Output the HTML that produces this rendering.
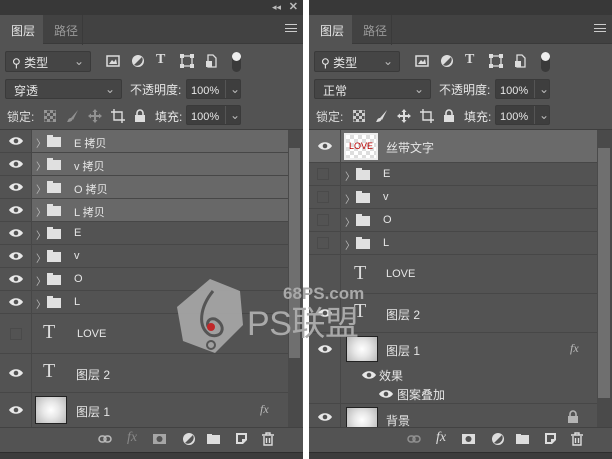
<!DOCTYPE html>
<html><head><meta charset="utf-8"><style>
*{margin:0;padding:0;box-sizing:border-box}
body{width:612px;height:459px;background:#fff;position:relative;overflow:hidden;font-family:"Liberation Sans","Noto Sans CJK SC",sans-serif;color:#e6e6e6;font-size:12px}
.p{position:absolute;top:0;width:303px;height:459px;background:#535353;overflow:hidden}
.a{position:absolute;white-space:nowrap}
.top{left:0;top:0;right:0;height:15px;background:#383838}
.tabs{left:0;top:15px;right:0;height:29px;background:#424242;border-bottom:1px solid #3a3a3a}
.tab{top:15px;height:30px;padding:7px 0 0 11px;font-size:12px}
.box{background:#454545;border:1px solid #3a3a3a;border-radius:2px}
.col{left:31px;top:0;bottom:0;width:1px;background:#474747}
.t{font-size:11px}
.fold{width:14px;height:10px;background:#e0e0e0}
.fold:before{content:"";position:absolute;left:0;top:-2px;width:6px;height:2px;background:#e0e0e0}
.chev{color:#bbb;font-size:10px}
.T{font-family:"Liberation Serif",serif;font-size:20px;color:#ddd}
.thumb{background:radial-gradient(circle,#fff 0%,#e8e8e8 40%,#b8b8b8 100%);border:1px solid #222}
.foot{left:0;right:0;top:427px;height:25px;background:#535353;border-top:1px solid #424242}
.bot{left:0;right:0;top:452px;height:7px;background:#3c3c3c;border-top:1px solid #2e2e2e}
svg.i{position:absolute}
</style></head><body>

<!-- shared icon defs -->
<svg width="0" height="0" style="position:absolute">
<defs>
<g id="eye"><path d="M1,5 C4,0 12,0 15,5 C12,10 4,10 1,5Z" fill="#e8e8e8"/><circle cx="8" cy="5" r="2.3" fill="#535353"/></g>
<g id="fimg"><rect x="1" y="1" width="12" height="10" fill="none" stroke="#ddd" stroke-width="1.5"/><path d="M3,9 L6,5 L8,7 L10,4 L11,9Z" fill="#ddd"/></g>
<g id="fadj"><circle cx="7" cy="7" r="6" fill="#ddd"/><path d="M11,3 A6,6 0 0 1 3,11Z" fill="#535353"/></g>
<g id="fshape"><rect x="2" y="2" width="10" height="10" fill="none" stroke="#ddd" stroke-width="1.3"/><rect x="0" y="0" width="4" height="4" fill="#ddd"/><rect x="10" y="0" width="4" height="4" fill="#ddd"/><rect x="0" y="10" width="4" height="4" fill="#ddd"/><rect x="10" y="10" width="4" height="4" fill="#ddd"/></g>
<g id="fsmart"><path d="M4,1 H9 L12,4 V13 H4Z" fill="none" stroke="#ddd" stroke-width="1.3"/><rect x="2" y="7" width="6" height="6" fill="#ddd"/></g>
<g id="flink"><rect x="1" y="3" width="7" height="6" rx="3" fill="none" stroke="#bbb" stroke-width="1.5"/><rect x="6" y="3" width="7" height="6" rx="3" fill="none" stroke="#bbb" stroke-width="1.5"/></g>
<g id="fmask"><rect x="0" y="1" width="13" height="10" fill="#ddd"/><circle cx="6.5" cy="6" r="3" fill="#535353"/></g>
<g id="ffold"><path d="M0,2 H5 V3 H13 V12 H0Z" fill="#ddd"/></g>
<g id="fnew"><path d="M1,1 H12 V8 L8,12 H1Z M3,3 V10 H7 V7 H10 V3Z" fill="#ddd" fill-rule="evenodd"/></g>
<g id="ftrash"><path d="M1,3 H13 M5,3 V1 H9 V3 M3,4 V13 H11 V4 M5.5,6 V11 M8.5,6 V11" fill="none" stroke="#ddd" stroke-width="1.4"/></g>
<g id="flock"><rect x="1" y="6" width="10" height="7" fill="#ddd"/><path d="M3,6 V4 A3,3 0 0 1 9,4 V6" fill="none" stroke="#ddd" stroke-width="1.6"/></g>
<g id="fchk"><rect x="0" y="0" width="12" height="12" fill="none" stroke="#ccc"/><path d="M0,0h3v3h-3zM6,0h3v3h-3zM3,3h3v3h-3zM9,3h3v3h-3zM0,6h3v3h-3zM6,6h3v3h-3zM3,9h3v3h-3zM9,9h3v3h-3z" fill="#ccc"/></g>
<g id="fbrush"><path d="M12,1 L5,9 L7,11 Z M5,9 C2,9 2,12 1,13 C4,13 7,12 6,10Z" fill="#ddd"/></g>
<g id="fmove"><path d="M7,0 L9.5,3 H8 V6 H11 V4.5 L14,7 L11,9.5 V8 H8 V11 H9.5 L7,14 L4.5,11 H6 V8 H3 V9.5 L0,7 L3,4.5 V6 H6 V3 H4.5Z" fill="#ddd"/></g>
<g id="fcrop"><path d="M3,0 V11 H14 M0,3 H11 V14" fill="none" stroke="#ddd" stroke-width="1.4"/></g>
</defs></svg>

<!-- LEFT PANEL -->
<div class="p" style="left:0">
<div class="a top"></div>
<div class="a" style="right:22px;top:2px;color:#bbb;font-size:9px">◂◂</div>
<div class="a" style="right:5px;top:0px;color:#bbb;font-size:11px;font-weight:bold">✕</div>
<div class="a tabs"></div>
<div class="a tab" style="left:0;width:43px;background:#535353">图层</div>
<div class="a tab" style="left:43px;width:40px;color:#999;border-right:1px solid #3a3a3a">路径</div>
<div class="a" style="right:6px;top:24px;width:12px;height:8px;border-top:1px solid #ccc;border-bottom:1px solid #ccc"><div style="margin-top:3px;height:1px;background:#ccc"></div></div>

<div class="a box" style="left:5px;top:51px;width:86px;height:21px;padding:2px 6px;width:86px">⚲ 类型<span style="position:absolute;right:6px;color:#bbb">⌄</span></div>
<svg class="i" style="left:106px;top:55px" width="14" height="12"><use href="#fimg"/></svg>
<svg class="i" style="left:131px;top:54px" width="14" height="14"><use href="#fadj"/></svg>
<div class="a" style="left:156px;top:52px;font-weight:bold;font-family:'Liberation Serif';font-size:14px;color:#ddd">T</div>
<svg class="i" style="left:180px;top:54px" width="14" height="14"><use href="#fshape"/></svg>
<svg class="i" style="left:204px;top:54px" width="14" height="14"><use href="#fsmart"/></svg>
<div class="a" style="left:232px;top:52px;width:9px;height:20px;background:#3a3a3a;border-radius:5px"><div style="width:9px;height:9px;border-radius:5px;background:#eee"></div></div>

<div class="a box" style="left:5px;top:79px;width:117px;height:20px;padding:2px 8px">穿透<span style="position:absolute;right:6px;color:#bbb">⌄</span></div>
<div class="a" style="left:130px;top:81px">不透明度:</div>
<div class="a box" style="left:186px;top:79px;width:55px;height:20px;padding:3px 4px;background:#3e3e3e"><span class="t">100%</span><span style="position:absolute;left:38px;top:0;bottom:0;border-left:1px solid #555;padding:2px 4px;color:#bbb">⌄</span></div>

<div class="a" style="left:7px;top:108px;color:#ddd">锁定:</div>
<svg class="i" style="left:44px;top:110px;opacity:.55" width="12" height="12"><use href="#fchk"/></svg>
<svg class="i" style="left:66px;top:109px;opacity:.45" width="14" height="14"><use href="#fbrush"/></svg>
<svg class="i" style="left:88px;top:109px;opacity:.45" width="14" height="14"><use href="#fmove"/></svg>
<svg class="i" style="left:111px;top:109px" width="14" height="14"><use href="#fcrop"/></svg>
<svg class="i" style="left:134px;top:109px" width="12" height="14"><use href="#flock"/></svg>
<div class="a" style="left:155px;top:108px">填充:</div>
<div class="a box" style="left:186px;top:105px;width:55px;height:20px;padding:3px 4px;background:#3e3e3e"><span class="t">100%</span><span style="position:absolute;left:38px;top:0;bottom:0;border-left:1px solid #555;padding:2px 4px;color:#bbb">⌄</span></div>

<div class="a" style="left:0;right:0;top:129px;height:1px;background:#3e3e3e"></div>
<div class="a" style="left:288px;top:130px;width:14px;height:297px;background:#4a4a4a"></div>
<div class="a" style="left:289px;top:148px;width:11px;height:210px;background:#6f6f6f"></div>

<div class="a" style="left:0;top:130px;width:288px">
 <div style="position:relative;height:23px;border-bottom:1px solid #474747"><div class="a" style="left:32px;right:0;top:0;bottom:0;background:#686868"></div><svg class="i" style="left:8px;top:6px" width="16" height="10"><use href="#eye"/></svg><span class="a chev" style="left:36px;top:5px">〉</span><div class="a fold" style="left:47px;top:7px"></div><span class="a t" style="left:74px;top:5px">E 拷贝</span></div>
 <div style="position:relative;height:23px;border-bottom:1px solid #474747"><div class="a" style="left:32px;right:0;top:0;bottom:0;background:#686868"></div><svg class="i" style="left:8px;top:6px" width="16" height="10"><use href="#eye"/></svg><span class="a chev" style="left:36px;top:5px">〉</span><div class="a fold" style="left:47px;top:7px"></div><span class="a t" style="left:74px;top:5px">v 拷贝</span></div>
 <div style="position:relative;height:23px;border-bottom:1px solid #474747"><div class="a" style="left:32px;right:0;top:0;bottom:0;background:#686868"></div><svg class="i" style="left:8px;top:6px" width="16" height="10"><use href="#eye"/></svg><span class="a chev" style="left:36px;top:5px">〉</span><div class="a fold" style="left:47px;top:7px"></div><span class="a t" style="left:74px;top:5px">O 拷贝</span></div>
 <div style="position:relative;height:23px;border-bottom:1px solid #474747"><div class="a" style="left:32px;right:0;top:0;bottom:0;background:#686868"></div><svg class="i" style="left:8px;top:6px" width="16" height="10"><use href="#eye"/></svg><span class="a chev" style="left:36px;top:5px">〉</span><div class="a fold" style="left:47px;top:7px"></div><span class="a t" style="left:74px;top:5px">L 拷贝</span></div>
 <div style="position:relative;height:23px;border-bottom:1px solid #474747"><svg class="i" style="left:8px;top:6px" width="16" height="10"><use href="#eye"/></svg><span class="a chev" style="left:36px;top:5px">〉</span><div class="a fold" style="left:47px;top:7px"></div><span class="a t" style="left:74px;top:5px">E</span></div>
 <div style="position:relative;height:23px;border-bottom:1px solid #474747"><svg class="i" style="left:8px;top:6px" width="16" height="10"><use href="#eye"/></svg><span class="a chev" style="left:36px;top:5px">〉</span><div class="a fold" style="left:47px;top:7px"></div><span class="a t" style="left:74px;top:5px">v</span></div>
 <div style="position:relative;height:23px;border-bottom:1px solid #474747"><svg class="i" style="left:8px;top:6px" width="16" height="10"><use href="#eye"/></svg><span class="a chev" style="left:36px;top:5px">〉</span><div class="a fold" style="left:47px;top:7px"></div><span class="a t" style="left:74px;top:5px">O</span></div>
 <div style="position:relative;height:23px;border-bottom:1px solid #474747"><svg class="i" style="left:8px;top:6px" width="16" height="10"><use href="#eye"/></svg><span class="a chev" style="left:36px;top:5px">〉</span><div class="a fold" style="left:47px;top:7px"></div><span class="a t" style="left:74px;top:5px">L</span></div>
 <div style="position:relative;height:40px;border-bottom:1px solid #474747"><div class="a" style="left:10px;top:14px;width:12px;height:12px;border:1px solid #4a4a4a"></div><span class="a T" style="left:43px;top:7px">T</span><span class="a t" style="left:77px;top:14px">LOVE</span></div>
 <div style="position:relative;height:39px;border-bottom:1px solid #474747"><svg class="i" style="left:8px;top:14px" width="16" height="10"><use href="#eye"/></svg><span class="a T" style="left:43px;top:6px">T</span><span class="a" style="left:76px;top:12px">图层 2</span></div>
 <div style="position:relative;height:34px"><svg class="i" style="left:8px;top:12px" width="16" height="10"><use href="#eye"/></svg><div class="a thumb" style="left:35px;top:3px;width:32px;height:28px"></div><span class="a" style="left:76px;top:10px">图层 1</span><span class="a" style="left:260px;top:9px;font-style:italic;color:#bbb;font-family:'Liberation Serif'">fx</span></div>
</div>
<div class="a col" style="top:130px;height:297px"></div>
<div class="a foot"></div>
<svg class="i" style="left:98px;top:433px" width="14" height="12"><use href="#flink"/></svg>
<div class="a" style="left:127px;top:430px;font-style:italic;font-family:'Liberation Serif';color:#888;font-size:14px">fx</div>
<svg class="i" style="left:153px;top:433px;opacity:.6" width="13" height="12"><use href="#fmask"/></svg>
<svg class="i" style="left:182px;top:432px" width="14" height="14"><use href="#fadj"/></svg>
<svg class="i" style="left:207px;top:432px" width="14" height="13"><use href="#ffold"/></svg>
<svg class="i" style="left:235px;top:432px" width="13" height="13"><use href="#fnew"/></svg>
<svg class="i" style="left:261px;top:432px" width="14" height="14"><use href="#ftrash"/></svg>
<div class="a bot"></div>
</div>

<!-- RIGHT PANEL -->
<div class="p" style="left:309px">
<div class="a top"></div>
<div class="a tabs"></div>
<div class="a tab" style="left:0;width:43px;background:#535353">图层</div>
<div class="a tab" style="left:43px;width:40px;color:#999;border-right:1px solid #3a3a3a">路径</div>
<div class="a" style="right:6px;top:24px;width:12px;height:8px;border-top:1px solid #ccc;border-bottom:1px solid #ccc"><div style="margin-top:3px;height:1px;background:#ccc"></div></div>

<div class="a box" style="left:5px;top:51px;width:86px;height:21px;padding:2px 6px">⚲ 类型<span style="position:absolute;right:6px;color:#bbb">⌄</span></div>
<svg class="i" style="left:106px;top:55px" width="14" height="12"><use href="#fimg"/></svg>
<svg class="i" style="left:131px;top:54px" width="14" height="14"><use href="#fadj"/></svg>
<div class="a" style="left:156px;top:52px;font-weight:bold;font-family:'Liberation Serif';font-size:14px;color:#ddd">T</div>
<svg class="i" style="left:180px;top:54px" width="14" height="14"><use href="#fshape"/></svg>
<svg class="i" style="left:204px;top:54px" width="14" height="14"><use href="#fsmart"/></svg>
<div class="a" style="left:232px;top:52px;width:9px;height:20px;background:#3a3a3a;border-radius:5px"><div style="width:9px;height:9px;border-radius:5px;background:#eee"></div></div>

<div class="a box" style="left:5px;top:79px;width:117px;height:20px;padding:2px 8px">正常<span style="position:absolute;right:6px;color:#bbb">⌄</span></div>
<div class="a" style="left:130px;top:81px">不透明度:</div>
<div class="a box" style="left:186px;top:79px;width:55px;height:20px;padding:3px 4px;background:#3e3e3e"><span class="t">100%</span><span style="position:absolute;left:38px;top:0;bottom:0;border-left:1px solid #555;padding:2px 4px;color:#bbb">⌄</span></div>

<div class="a" style="left:7px;top:108px;color:#ddd">锁定:</div>
<svg class="i" style="left:44px;top:110px" width="12" height="12"><use href="#fchk"/></svg>
<svg class="i" style="left:66px;top:109px" width="14" height="14"><use href="#fbrush"/></svg>
<svg class="i" style="left:88px;top:109px" width="14" height="14"><use href="#fmove"/></svg>
<svg class="i" style="left:111px;top:109px" width="14" height="14"><use href="#fcrop"/></svg>
<svg class="i" style="left:134px;top:109px" width="12" height="14"><use href="#flock"/></svg>
<div class="a" style="left:155px;top:108px">填充:</div>
<div class="a box" style="left:186px;top:105px;width:55px;height:20px;padding:3px 4px;background:#3e3e3e"><span class="t">100%</span><span style="position:absolute;left:38px;top:0;bottom:0;border-left:1px solid #555;padding:2px 4px;color:#bbb">⌄</span></div>

<div class="a" style="left:0;right:0;top:129px;height:1px;background:#3e3e3e"></div>
<div class="a" style="left:288px;top:130px;width:15px;height:297px;background:#4a4a4a"></div>
<div class="a" style="left:289px;top:148px;width:12px;height:250px;background:#6f6f6f"></div>

<div class="a" style="left:0;top:130px;width:288px">
 <div style="position:relative;height:33px;background:#6a6a6a;border-bottom:1px solid #474747"><svg class="i" style="left:8px;top:11px" width="16" height="10"><use href="#eye"/></svg><div class="a" style="left:35px;top:3px;width:34px;height:27px;border:2px solid #eee;background:repeating-conic-gradient(#ddd 0 25%,#fff 0 50%) 0 0/8px 8px;color:#b00;font-size:9px;text-align:center;line-height:23px">LOVE</div><span class="a" style="left:77px;top:9px">丝带文字</span></div>
 <div style="position:relative;height:23px;border-bottom:1px solid #474747"><div class="a" style="left:8px;top:5px;width:12px;height:12px;border:1px solid #4a4a4a"></div><span class="a chev" style="left:36px;top:5px">〉</span><div class="a fold" style="left:47px;top:7px"></div><span class="a t" style="left:74px;top:5px">E</span></div>
 <div style="position:relative;height:23px;border-bottom:1px solid #474747"><div class="a" style="left:8px;top:5px;width:12px;height:12px;border:1px solid #4a4a4a"></div><span class="a chev" style="left:36px;top:5px">〉</span><div class="a fold" style="left:47px;top:7px"></div><span class="a t" style="left:74px;top:5px">v</span></div>
 <div style="position:relative;height:23px;border-bottom:1px solid #474747"><div class="a" style="left:8px;top:5px;width:12px;height:12px;border:1px solid #4a4a4a"></div><span class="a chev" style="left:36px;top:5px">〉</span><div class="a fold" style="left:47px;top:7px"></div><span class="a t" style="left:74px;top:5px">O</span></div>
 <div style="position:relative;height:23px;border-bottom:1px solid #474747"><div class="a" style="left:8px;top:5px;width:12px;height:12px;border:1px solid #4a4a4a"></div><span class="a chev" style="left:36px;top:5px">〉</span><div class="a fold" style="left:47px;top:7px"></div><span class="a t" style="left:74px;top:5px">L</span></div>
 <div style="position:relative;height:39px;border-bottom:1px solid #474747"><span class="a T" style="left:45px;top:7px">T</span><span class="a t" style="left:77px;top:13px">LOVE</span></div>
 <div style="position:relative;height:39px;border-bottom:1px solid #474747"><svg class="i" style="left:8px;top:14px" width="16" height="10"><use href="#eye"/></svg><span class="a T" style="left:45px;top:6px">T</span><span class="a" style="left:77px;top:12px">图层 2</span></div>
 <div style="position:relative;height:32px"><svg class="i" style="left:8px;top:11px" width="16" height="10"><use href="#eye"/></svg><div class="a thumb" style="left:37px;top:3px;width:32px;height:26px"></div><span class="a" style="left:77px;top:9px">图层 1</span><span class="a" style="left:261px;top:8px;font-style:italic;color:#bbb;font-family:'Liberation Serif'">fx</span></div>
 <div style="position:relative;height:20px"><svg class="i" style="left:52px;top:5px" width="16" height="10"><use href="#eye"/></svg><span class="a" style="left:70px;top:2px">效果</span></div>
 <div style="position:relative;height:19px;border-bottom:1px solid #474747"><svg class="i" style="left:69px;top:4px" width="16" height="10"><use href="#eye"/></svg><span class="a" style="left:88px;top:1px">图案叠加</span></div>
 <div style="position:relative;height:22px"><svg class="i" style="left:8px;top:8px" width="16" height="10"><use href="#eye"/></svg><div class="a thumb" style="left:37px;top:3px;width:32px;height:26px"></div><span class="a" style="left:77px;top:8px">背景</span><svg class="i" style="left:258px;top:6px;opacity:.7" width="12" height="14"><use href="#flock"/></svg></div>
</div>
<div class="a col" style="top:130px;height:297px"></div>
<div class="a foot"></div>
<svg class="i" style="left:98px;top:433px;opacity:.6" width="14" height="12"><use href="#flink"/></svg>
<div class="a" style="left:127px;top:430px;font-style:italic;font-family:'Liberation Serif';color:#ddd;font-size:14px">fx</div>
<svg class="i" style="left:153px;top:433px" width="13" height="12"><use href="#fmask"/></svg>
<svg class="i" style="left:182px;top:432px" width="14" height="14"><use href="#fadj"/></svg>
<svg class="i" style="left:207px;top:432px" width="14" height="13"><use href="#ffold"/></svg>
<svg class="i" style="left:235px;top:432px" width="13" height="13"><use href="#fnew"/></svg>
<svg class="i" style="left:261px;top:432px" width="14" height="14"><use href="#ftrash"/></svg>
<div class="a bot"></div>
</div>

<!-- watermark -->
<svg class="a" style="left:175px;top:277px" width="190" height="80" viewBox="0 0 190 80">
<polygon points="35,2 65,14 68,48 40,76 8,64 2,30" fill="#a9a9a9" opacity=".9"/>
<path d="M38,14 C25,30 22,50 35,58 C48,62 52,48 40,42 C32,40 30,50 36,52" stroke="#555" stroke-width="3" fill="none"/>
<circle cx="36" cy="50" r="4" fill="#c0282a"/>
<circle cx="36" cy="68" r="4" stroke="#555" stroke-width="2" fill="none"/>
<text x="108" y="22" font-family="Liberation Sans" font-weight="bold" font-size="17" fill="#a9a9a9">68PS.com</text>
<text x="72" y="58" font-family="Liberation Sans,Noto Sans CJK SC" font-size="34" fill="#a9a9a9" textLength="112">PS联盟</text>
</svg>
</body></html>
